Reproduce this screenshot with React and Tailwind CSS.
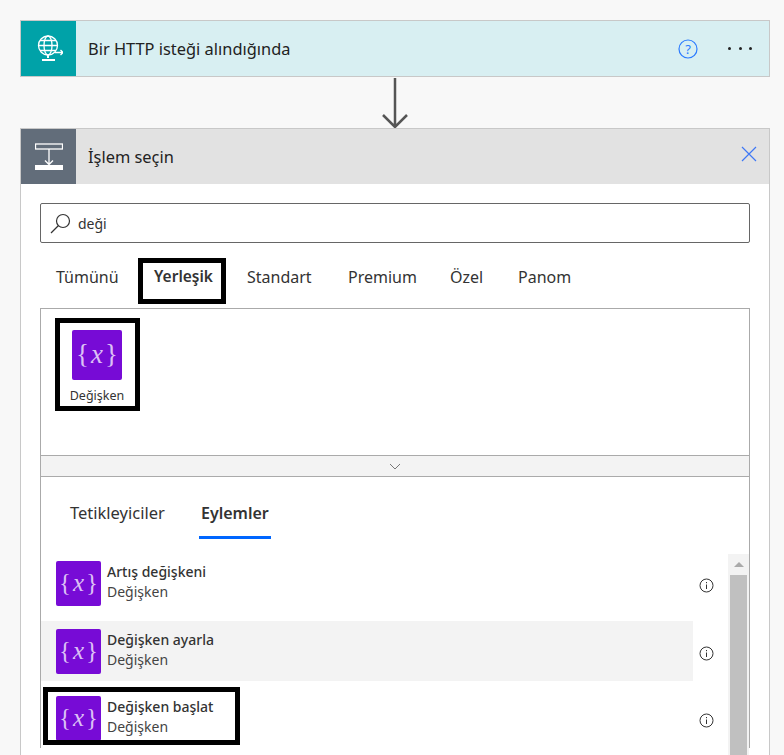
const font = { fontFamily: '"Noto Sans", sans-serif' };

const VariableIcon = ({ big }) => (
    <div
        className={`flex shrink-0 items-center justify-center rounded-[2px] bg-[#770bd6] text-[#dcc0f5] ${big ? "h-[50px] w-[50px]" : "h-[45px] w-[45px]"}`}
        style={{ fontFamily: '"Liberation Serif", serif' }}
    >
        <span className={big ? "mt-[-2px] text-[27px] leading-none" : "mt-[-2px] text-[25px] leading-none"}>
            {"{"}
            <i className="px-[2px]">x</i>
            {"}"}
        </span>
    </div>
);

const InfoIcon = () => (
    <svg width="15" height="15" viewBox="0 0 15 15" fill="none" className="shrink-0">
        <circle cx="7.5" cy="7.5" r="6.5" stroke="#333" strokeWidth="1" />
        <rect x="7" y="6.5" width="1" height="4.5" fill="#333" />
        <rect x="7" y="4" width="1" height="1.2" fill="#333" />
    </svg>
);

const Row = ({ title, hover }) => (
    <div className="flex items-center">
        <div className={`flex h-[60px] w-[652px] items-center gap-[6px] pl-[15px] ${hover ? "bg-[#f3f3f3]" : ""}`}>
            <VariableIcon />
            <div className="mt-[-2px] text-[14px] leading-[20px] text-[#333]">
                <div className="font-medium">{title}</div>
                <div className="text-[#444]">Değişken</div>
            </div>
        </div>
        <div className="ml-[6px] mt-[5px]">
            <InfoIcon />
        </div>
    </div>
);

export default function App() {
    return (
        <div className="h-[755px] w-[784px] overflow-hidden bg-[#f8f8f8] pl-[20px] pt-[20px]" style={font}>
            {/* trigger card */}
            <div className="flex h-[57px] w-[750px] items-center border border-[#c8c8c8] bg-[#d8eff2]">
                <div className="flex h-[55px] w-[55px] shrink-0 items-center justify-center bg-[#00a2a8]">
                    <svg width="28" height="28" viewBox="0 0 28 28" fill="none" stroke="#fff" strokeWidth="1.3">
                        <circle cx="13" cy="10.500" r="9.500" />
                        <ellipse cx="13" cy="10.500" rx="4" ry="9.500" />
                        <path d="M3.500 10.500h19M5 5.500h16M5 15.500h16" />
                        <path d="M13 20v3M7 25h13" strokeWidth="2" />
                        <path d="M20 17.500h8M25.500 15l2.500 2.500-2.500 2.500" />
                    </svg>
                </div>
                <div className="ml-[12px] mt-[2px] flex-1 text-[16.400px] text-[#222]">Bir HTTP isteği alındığında</div>
                <svg width="20" height="20" viewBox="0 0 20 20" fill="none" className="mr-[30px]">
                    <circle cx="10" cy="10" r="9" stroke="#2b7bff" strokeWidth="1.2" />
                    <text x="10" y="15" textAnchor="middle" fontSize="13" fill="#2b7bff" fontFamily="Noto Sans">?</text>
                </svg>
                <div className="mr-[17px] flex gap-[7.500px]">
                    <span className="h-[3px] w-[3px] rounded-full bg-[#222]"></span>
                    <span className="h-[3px] w-[3px] rounded-full bg-[#222]"></span>
                    <span className="h-[3px] w-[3px] rounded-full bg-[#222]"></span>
                </div>
            </div>

            {/* connector arrow */}
            <div className="flex h-[51px] w-[750px] justify-center">
                <svg width="28" height="51" viewBox="0 0 28 51" fill="none" stroke="#555" strokeWidth="2.500" className="ml-[-1px]">
                    <path d="M14 1v48M2 38l12 12 12-12" />
                </svg>
            </div>

            {/* action picker card */}
            <div className="h-[700px] w-[750px] border border-[#c8c8c8] bg-white">
                <div className="flex h-[55px] items-center bg-[#e2e2e2]">
                    <div className="flex h-[55px] w-[55px] shrink-0 items-center justify-center bg-[#626d7a]">
                        <svg width="28" height="28" viewBox="0 0 28 28" fill="none" stroke="#fff" strokeWidth="1.3">
                            <rect x="0.500" y="1" width="27" height="5" />
                            <path d="M14 6v15M10 17.500l4 4 4-4" />
                            <rect x="0" y="22" width="28" height="5" fill="#fff" stroke="none" />
                        </svg>
                    </div>
                    <div className="ml-[12px] mt-[2px] flex-1 text-[16.400px] text-[#222]">İşlem seçin</div>
                    <svg width="16" height="16" viewBox="0 0 16 16" fill="none" stroke="#3f78f5" strokeWidth="1.2" className="mr-[12px] mb-[6px]">
                        <path d="M1 1l14 14M15 1L1 15" />
                    </svg>
                </div>

                <div className="pl-[19px] pt-[19px]">
                    <div className="flex h-[40px] w-[710px] items-center rounded-[2px] border border-[#666] pl-[9px] text-[14px] text-[#333]">
                        <svg width="21" height="21" viewBox="0 0 21 21" fill="none" stroke="#333" strokeWidth="1.200">
                            <circle cx="13" cy="8" r="6.500" />
                            <path d="M8.500 12.500L1 20" />
                        </svg>
                        <span className="ml-[7px]">deği</span>
                    </div>

                    <div className="mt-[15px] flex h-[46px] items-center text-[16px] text-[#333]">
                        <span className="mb-[8px] ml-[16px] w-[82px]">Tümünü</span>
                        <span className="flex h-[46px] w-[88px] items-center justify-center border-[5px] border-black pb-[8px] pl-[3px] text-[15.500px] font-semibold">Yerleşik</span>
                        <span className="mb-[8px] ml-[21px] w-[101px]">Standart</span>
                        <span className="mb-[8px] w-[102px]">Premium</span>
                        <span className="mb-[8px] w-[68px]">Özel</span>
                        <span className="mb-[8px]">Panom</span>
                    </div>

                    <div className="mt-[4px] w-[710px] border-x border-t border-[#aaa]">
                        <div className="h-[146px] pl-[14px] pt-[9px]">
                            <div className="flex h-[93px] w-[85px] flex-col items-center border-[5px] border-black pr-[1px] pt-[7px]">
                                <VariableIcon big />
                                <div className="mt-[8px] text-[12.500px] leading-[16px] text-[#333]">Değişken</div>
                            </div>
                        </div>
                        <div className="flex h-[22px] items-center justify-center border-y border-[#aaa] bg-[#f3f3f3]">
                            <svg width="12" height="7" viewBox="0 0 12 7" fill="none" stroke="#777" strokeWidth="1">
                                <path d="M1 1l5 5 5-5" />
                            </svg>
                        </div>

                        <div className="relative">
                            <div className="flex h-[62px] items-start pl-[29px] pt-[24px] text-[16.500px] leading-[24px] text-[#333]">
                                <span className="w-[129px]">Tetikleyiciler</span>
                                <span className="border-b-[3px] border-[#0066ff] px-[2px] pb-[11px] text-[16px] font-semibold">Eylemler</span>
                            </div>
                            <div className="relative mt-[14px]">
                                <div className="flex flex-col">
                                    <Row title="Artış değişkeni" />
                                    <div className="mt-[8px]">
                                        <Row title="Değişken ayarla" hover />
                                    </div>
                                    <div className="mt-[7px]">
                                        <Row title="Değişken başlat" />
                                    </div>
                                </div>
                                {/* highlight drawn over the third row */}
                                <div className="absolute left-[2px] top-[134px] h-[58px] w-[197px] border-[5px] border-black"></div>
                            </div>
                            {/* scrollbar */}
                            <div className="absolute right-0 top-[77px] h-[300px] w-[21px] bg-[#f3f3f3] px-[2px]">
                                <div className="flex h-[21px] items-center justify-center">
                                    <div className="h-0 w-0 border-x-[5px] border-b-[5px] border-x-transparent border-b-[#aaa]"></div>
                                </div>
                                <div className="h-[280px] bg-[#c0c0c0]"></div>
                            </div>
                        </div>
                    </div>
                </div>
            </div>
        </div>
    );
}
